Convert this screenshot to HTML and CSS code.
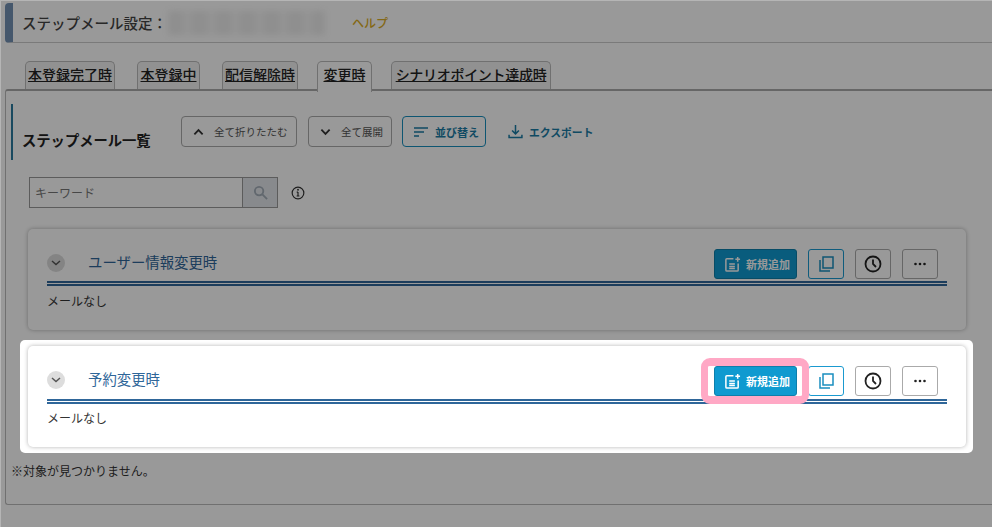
FILE: index.html
```html
<!DOCTYPE html>
<html lang="ja">
<head>
<meta charset="utf-8">
<title>ステップメール設定</title>
<link rel="stylesheet" href="styles.css">
</head>
<body>
<div class="page">
  <header class="head">
    <h1 class="head-title">ステップメール設定：</h1>
    <div class="head-blur"></div>
    <a class="help">ヘルプ</a>
  </header>
  <nav class="tabs">
    <a class="tab tab-a">本登録完了時</a>
    <a class="tab tab-b">本登録中</a>
    <a class="tab tab-c">配信解除時</a>
    <a class="tab tab-d tab-active">変更時</a>
    <a class="tab tab-e">シナリオポイント達成時</a>
  </nav>
  <main class="panel">
    <div class="list-head">
      <h2 class="list-title">ステップメール一覧</h2>
      <div class="tools">
        <button class="tool tool-fold"><svg class="tool-chev" viewBox="0 0 12 8"><path d="M1.5 6.5 6 2l4.5 4.5"/></svg>全て折りたたむ</button>
        <button class="tool tool-open"><svg class="tool-chev" viewBox="0 0 12 8"><path d="M1.5 1.5 6 6l4.5-4.5"/></svg>全て展開</button>
        <button class="tool tool-sort"><svg class="sort-ic" viewBox="0 0 16 12"><path d="M1 2h14M1 6h10M1 10h5"/></svg>並び替え</button>
        <a class="export"><svg class="export-ic" viewBox="0 0 14 14"><path d="M7 1v8M3.8 6 7 9.2 10.2 6M1 10v2.5h12V10"/></svg>エクスポート</a>
      </div>
    </div>
    <div class="search">
      <div class="search-box">
        <input class="search-input" placeholder="キーワード">
        <span class="search-btn"><svg viewBox="0 0 16 16" class="search-ic"><circle cx="6.5" cy="6.5" r="4.5"/><path d="m10 10 5 5"/></svg></span>
      </div>
      <svg class="info-ic" viewBox="0 0 12 12"><circle cx="6" cy="6" r="5"/><path d="M6 5.2v3.4M4.8 8.6h2.4M4.9 5.2H6"/><circle class="dot" cx="6" cy="3.2" r=".8"/></svg>
    </div>
    <section class="card">
      <div class="card-head">
        <span class="toggle"><svg viewBox="0 0 10 6"><path d="M1 1l4 3.5L9 1"/></svg></span>
        <h3 class="card-title">ユーザー情報変更時</h3>
        <div class="card-btns">
          <button class="btn-new"><svg class="new-ic" viewBox="0 0 18 18"><path d="M10 3H3a1 1 0 0 0-1 1v11a1 1 0 0 0 1 1h11a1 1 0 0 0 1-1V8"/><path d="M5.500 8.500h6M5.500 11h6M5.500 13.300h6"/><path d="M14.500 1v5M12 3.500h5"/></svg>新規追加</button>
          <button class="btn-ic btn-copy"><svg viewBox="0 0 18 18"><path d="M6 2h10v11H6z"/><path d="M3 5v11h10"/></svg></button>
          <button class="btn-ic"><svg viewBox="0 0 18 18"><circle cx="9" cy="9" r="7.500"/><path d="M9 4.500V9l3 3"/></svg></button>
          <button class="btn-ic btn-more"><svg viewBox="0 0 14 4"><circle cx="2.500" cy="2" r="1.300"/><circle cx="7" cy="2" r="1.300"/><circle cx="11.500" cy="2" r="1.300"/></svg></button>
        </div>
      </div>
      <p class="card-empty">メールなし</p>
    </section>
    <section class="card">
      <div class="card-head">
        <span class="toggle"><svg viewBox="0 0 10 6"><path d="M1 1l4 3.5L9 1"/></svg></span>
        <h3 class="card-title">予約変更時</h3>
        <div class="card-btns">
          <button class="btn-new"><svg class="new-ic" viewBox="0 0 18 18"><path d="M10 3H3a1 1 0 0 0-1 1v11a1 1 0 0 0 1 1h11a1 1 0 0 0 1-1V8"/><path d="M5.500 8.500h6M5.500 11h6M5.500 13.300h6"/><path d="M14.500 1v5M12 3.500h5"/></svg>新規追加</button>
          <button class="btn-ic btn-copy"><svg viewBox="0 0 18 18"><path d="M6 2h10v11H6z"/><path d="M3 5v11h10"/></svg></button>
          <button class="btn-ic"><svg viewBox="0 0 18 18"><circle cx="9" cy="9" r="7.500"/><path d="M9 4.500V9l3 3"/></svg></button>
          <button class="btn-ic btn-more"><svg viewBox="0 0 14 4"><circle cx="2.500" cy="2" r="1.300"/><circle cx="7" cy="2" r="1.300"/><circle cx="11.500" cy="2" r="1.300"/></svg></button>
        </div>
      </div>
      <p class="card-empty">メールなし</p>
    </section>
    <p class="notfound">※対象が見つかりません。</p>
  </main>
</div>
<div class="spotlight"></div>
<div class="ring"></div>
<div class="edge"></div>
</body>
</html>
```
FILE: styles.css
```css
* { box-sizing: border-box; }
html, body { margin: 0; height: 100%; }
body {
  position: relative;
  overflow: hidden;
  background: #fff;
  font-family: "Noto Sans CJK JP", "Noto Sans", sans-serif;
  color: #333;
  font-size: 12px;
}
.page { padding: 3px 0 0 5px; height: 527px; }

.head {
  display: flex;
  align-items: center;
  height: 40px;
  border-bottom: 1px solid #ccc;
  border-left: 8px solid #7392b5;
  border-radius: 4px 0 0 4px;
  padding-left: 9px;
}
.head-title { margin: 0; font-size: 14.5px; font-weight: 500; color: #444; width: 146px; white-space: nowrap; }
.head-blur {
  width: 157px;
  height: 24px;
  background: repeating-linear-gradient(90deg, #eee 0 15px, #f6f6f6 15px 24px);
  filter: blur(3px);
}
.help { margin-left: 27px; color: #dcae25; font-size: 12px; font-weight: 500; }

.tabs { display: flex; margin-top: 18px; height: 28px; padding-left: 20px; align-items: flex-start; }
.tab {
  height: 28px;
  padding: 1px 2px 0;
  border: 1px solid #bbb;
  border-bottom: 0;
  border-radius: 5px 5px 0 0;
  background: #f2f2f2;
  color: #222;
  font-size: 14px;
  line-height: 22px;
  font-weight: 500;
  text-decoration: underline;
  white-space: nowrap;
  text-align: center;
}
.tab-a { width: 90px; }
.tab-b { width: 63px; margin-left: 22px; }
.tab-c { width: 76px; margin-left: 22px; }
.tab-d { width: 55px; margin-left: 19px; }
.tab-e { width: 160px; margin-left: 19px; letter-spacing: -.3px; }
.tab-active { background: #fff; height: 31px; position: relative; }

.panel {
  height: 416px;
  border: 1px solid #bbb;
  border-top: 2px solid #aaa;
  border-right: 0;
  border-radius: 3px 0 0 3px;
  padding: 13px 0 0 5px;
}
.list-head {
  display: flex;
  height: 56px;
  border-left: 2px solid #2a7a9e;
  padding-left: 9px;
}
.list-title { margin: 26px 0 0; font-size: 14.3px; font-weight: 700; color: #222; width: 159px; white-space: nowrap; line-height: 20px; }
.tools { display: flex; align-items: flex-start; padding-top: 12px; }
.tool {
  display: flex;
  align-items: center;
  height: 31px;
  border: 1px solid #aaa;
  border-radius: 4px;
  background: #fff;
  font-family: inherit;
  font-size: 10.5px;
  color: #555;
  padding: 0;
  white-space: nowrap;
}
.tool-chev { width: 11px; height: 8px; margin: 0 10px 0 11px; fill: none; stroke: #333; stroke-width: 2; }
.tool-fold { width: 116px; }
.tool-open { width: 84px; margin-left: 11px; }
.tool-sort { width: 84px; margin-left: 10px; border-color: #1890bf; color: #1a7ca5; font-weight: 700; font-size: 11px; }
.sort-ic { width: 16px; height: 12px; margin: 0 6px 0 10px; fill: none; stroke: #1a7ca5; stroke-width: 1.5; }
.export { display: flex; align-items: center; height: 31px; margin-left: 22px; color: #1a7ca5; font-weight: 700; font-size: 10.8px; white-space: nowrap; }
.export-ic { width: 15px; height: 15px; margin-right: 6px; fill: none; stroke: #1a7ca5; stroke-width: 1.4; }

.search { display: flex; align-items: center; margin: 17px 0 0 18px; height: 31px; }
.search-box { display: flex; width: 249px; height: 31px; border: 1px solid #999; }
.search-input { flex: 1; min-width: 0; border: 0; padding: 0 5px; font-family: inherit; font-size: 12px; outline: 0; background: #fff; }
.search-input::placeholder { color: #777; }
.search-btn { width: 35px; border-left: 1px solid #999; background: #e3e7ec; display: flex; align-items: center; justify-content: center; }
.search-ic { width: 15px; height: 15px; fill: none; stroke: #a3adb8; stroke-width: 2; }
.info-ic { width: 14px; height: 14px; margin-left: 13px; fill: none; stroke: #333; stroke-width: 1; }
.info-ic .dot { fill: #333; stroke: none; }

.card {
  width: 938px;
  height: 101px;
  margin: 21px 0 16px 17px;
  border-radius: 5px;
  background: #fff;
  box-shadow: 0 0 4px rgba(0,0,0,.3);
  padding: 0 19px;
}
.card + .card { margin-top: 0; margin-bottom: 0; }
.card-head {
  display: flex;
  align-items: flex-start;
  height: 57px;
  padding-top: 20px;
  border-bottom: 5px double #2f6699;
}
.card + .card .card-head { height: 58px; }
.card + .card .card-empty { margin-top: 5px; }
.toggle { width: 18px; height: 18px; margin-top: 5px; border-radius: 50%; background: #ddd; display: flex; align-items: center; justify-content: center; }
.toggle svg { width: 10px; height: 6px; fill: none; stroke: #555; stroke-width: 1.5; }
.card-title { margin: 3px 0 0 23px; font-size: 14.4px; font-weight: 400; color: #2f6699; line-height: 20px; }
.card-btns { margin-left: auto; margin-right: 9px; display: flex; gap: 11px; }
.btn-new {
  display: flex; align-items: center;
  width: 83px; height: 30px;
  padding: 0 0 0 9px;
  background: #0f9ad0;
  border: 1px solid #0d7fab;
  border-radius: 3px;
  color: #fff;
  font-family: inherit;
  font-size: 11px;
  font-weight: 700;
  white-space: nowrap;
}
.new-ic { width: 17px; height: 17px; margin-right: 5px; fill: none; stroke: #fff; stroke-width: 1.6; }
.btn-ic { width: 36px; height: 30px; padding: 0; border: 1px solid #aaa; border-radius: 3px; background: #fff; display: flex; align-items: center; justify-content: center; }
.btn-ic svg { width: 18px; height: 18px; fill: none; stroke: #222; stroke-width: 1.8; }
.btn-copy { border-color: #1a9ad0; }
.btn-copy svg { stroke: #1a8fc0; stroke-width: 1.5; }
.btn-more svg { width: 14px; height: 4px; fill: #222; stroke: none; }
.card-empty { margin: 6px 0 0; font-size: 12px; color: #333; line-height: 18px; }
.notfound { margin: 15px 0 0; font-size: 12px; color: #333; line-height: 18px; }

.spotlight {
  position: absolute;
  left: 20px; top: 340px;
  width: 953px; height: 113px;
  border-radius: 5px;
  box-shadow: 0 0 0 2000px rgba(0,0,0,.4);
}
.ring {
  position: absolute;
  left: 701px; top: 358px;
  width: 108px; height: 46px;
  border: solid #ffa8c5;
  border-width: 8px 7px;
  border-radius: 9px;
}
.edge {
  position: absolute;
  inset: 0;
  border-top: 1px solid #b5b5b5;
  border-left: 1px solid #b5b5b5;
  pointer-events: none;
}
```
